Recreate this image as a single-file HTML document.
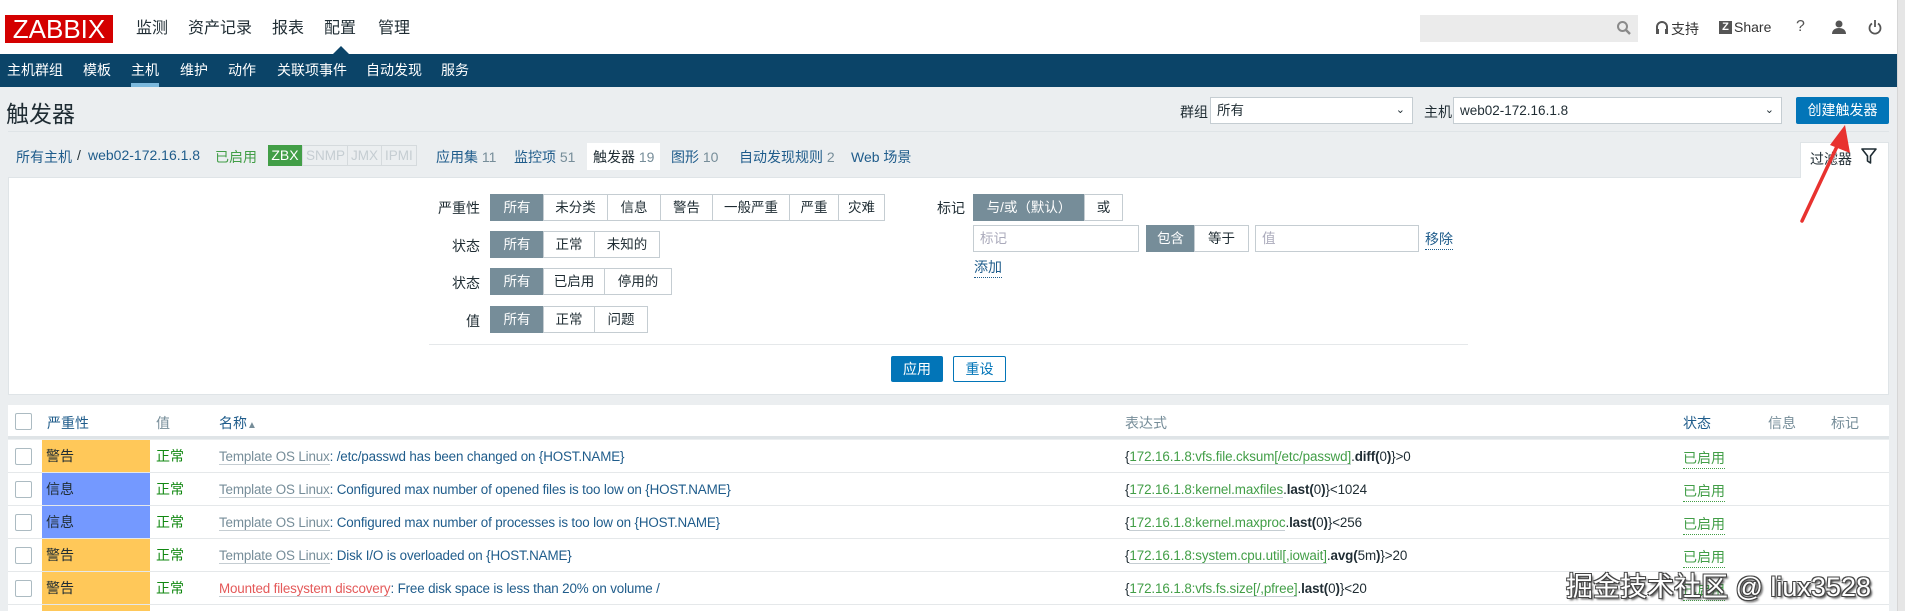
<!DOCTYPE html>
<html><head><meta charset="utf-8"><style>
*{box-sizing:border-box;margin:0;padding:0}
html,body{width:1905px;height:611px;overflow:hidden}
body{background:#ebeef0;font-family:"Liberation Sans","Noto Sans CJK SC",sans-serif;font-size:14px;color:#1f2c33;position:relative}
.a{position:absolute;white-space:nowrap}
.hdr{left:0;top:0;width:1905px;height:54px;background:#fff}
.nav{left:0;top:54px;width:1905px;height:33px;background:#0b4468}
.sb{left:1897px;top:0;width:8px;height:611px;background:#e6e6e6;border-left:1px solid #d6d6d6}
.mn{top:14px;font-size:16px;color:#1f2c33}
.sn{top:60px;font-size:14px;color:#fff}
.btn{position:absolute;height:27px;border:1px solid #c5cdd2;background:#fff;font-size:13.5px;line-height:25px;text-align:center;color:#1f2c33}
.act{background:#768d99;color:#fff;border-color:#768d99}
.lbl{font-size:14px;text-align:right}
.hl{color:#1f5c8b}
.row{left:8px;width:1881px;height:33px;background:#fff;border-bottom:1px solid #e5e8ea;font-size:13.4px;overflow:hidden}
.cb{position:absolute;left:7px;top:8px;width:17px;height:17px;border:1px solid #acbbc2;border-radius:2px;background:#fff}
.sev{position:absolute;left:34px;top:0;width:108px;height:33px;padding-left:4px;line-height:33px;color:#1f2c33;font-size:14px}
.val{position:absolute;left:148px;line-height:33px;color:#118811;font-size:14px}
.nm{position:absolute;left:211px;line-height:33px;color:#1f5c8b;letter-spacing:-0.15px}
.tp{color:#768d99;border-bottom:1px solid #c5cdd2}
.ex{position:absolute;left:1117px;line-height:33px;letter-spacing:-0.1px}
.gk{color:#429e47;border-bottom:1px solid #c5cdd2}
.st{position:absolute;left:1675px;line-height:31px;color:#429e47;border-bottom:1px dotted #429e47;height:26px;top:3px;font-size:14px}
.inp{position:absolute;height:27px;border:1px solid #c5cdd2;background:#fff;color:#aab;font-size:13.5px;line-height:25px;padding-left:6px}
</style></head><body>
<div class="a hdr"></div>
<div class="a" style="left:5px;top:15px;width:108px;height:28px;background:#d40000;color:#fff;font-size:26px;line-height:28px;text-align:center">ZABBIX</div>
<div class="a mn" style="left:136px">监测</div>
<div class="a mn" style="left:188px">资产记录</div>
<div class="a mn" style="left:272px">报表</div>
<div class="a mn" style="left:324px">配置</div>
<div class="a mn" style="left:378px">管理</div>
<div class="a" style="left:333px;top:46px;width:0;height:0;border-left:8px solid transparent;border-right:8px solid transparent;border-bottom:8px solid #0b4468"></div>
<div class="a" style="left:1420px;top:15px;width:218px;height:27px;background:#ebebeb"></div>
<svg class="a" style="left:1616px;top:20px" width="16" height="16" viewBox="0 0 16 16"><circle cx="6.5" cy="6.5" r="4.5" fill="none" stroke="#8a8a8a" stroke-width="2"/><path d="M10 10l4 4" stroke="#8a8a8a" stroke-width="2.4"/></svg>
<svg class="a" style="left:1655px;top:20px" width="14" height="16" viewBox="0 0 14 16"><path d="M2 10V7a5 5 0 0 1 10 0v3" fill="none" stroke="#555" stroke-width="2"/><rect x="1" y="9" width="3" height="5" fill="#555"/><rect x="10" y="9" width="3" height="5" fill="#555"/></svg>
<div class="a" style="left:1671px;top:19px;font-size:14px;color:#333">支持</div>
<div class="a" style="left:1719px;top:21px;width:13px;height:13px;background:#555;color:#fff;font-size:11px;font-weight:bold;line-height:13px;text-align:center">Z</div>
<div class="a" style="left:1734px;top:19px;font-size:14px;color:#333">Share</div>
<div class="a" style="left:1796px;top:18px;font-size:16px;color:#555">?</div>
<svg class="a" style="left:1831px;top:19px" width="16" height="16" viewBox="0 0 16 16"><circle cx="8" cy="5" r="3.5" fill="#555"/><path d="M1 15c0-4 3-6 7-6s7 2 7 6z" fill="#555"/></svg>
<svg class="a" style="left:1867px;top:19px" width="16" height="16" viewBox="0 0 16 16"><path d="M5 4.5a5.5 5.5 0 1 0 6 0" fill="none" stroke="#555" stroke-width="1.8"/><path d="M8 1v7" stroke="#555" stroke-width="1.8"/></svg>
<div class="a nav"></div>
<div class="a sn" style="left:7px">主机群组</div>
<div class="a sn" style="left:83px">模板</div>
<div class="a sn" style="left:131px">主机</div>
<div class="a" style="left:131px;top:83px;width:28px;height:4px;background:#7cb8dc"></div>
<div class="a sn" style="left:180px">维护</div>
<div class="a sn" style="left:228px">动作</div>
<div class="a sn" style="left:277px">关联项事件</div>
<div class="a sn" style="left:366px">自动发现</div>
<div class="a sn" style="left:441px">服务</div>
<div class="a sb"></div>

<div class="a" style="left:6px;top:95px;font-size:23px;color:#1f2c33">触发器</div>
<div class="a lbl" style="left:1180px;top:102px">群组</div>
<div class="a inp" style="left:1210px;top:97px;width:203px;color:#1f2c33">所有<span style="position:absolute;right:7px;font-size:11px">&#8964;</span></div>
<div class="a lbl" style="left:1424px;top:102px">主机</div>
<div class="a inp" style="left:1453px;top:97px;width:329px;color:#1f2c33">web02-172.16.1.8<span style="position:absolute;right:7px;font-size:11px">&#8964;</span></div>
<div class="a" style="left:1796px;top:97px;width:93px;height:27px;background:#0275b8;border-radius:2px;color:#fff;font-size:14px;line-height:27px;text-align:center">创建触发器</div>
<div class="a" style="left:8px;top:131px;width:1881px;height:1px;background:#dfe4e7"></div>

<div class="a hl" style="left:16px;top:147px">所有主机</div>
<div class="a" style="left:77px;top:147px">/</div>
<div class="a hl" style="left:88px;top:147px">web02-172.16.1.8</div>
<div class="a" style="left:215px;top:147px;color:#429e47">已启用</div>
<div class="a" style="left:268px;top:145px;width:34px;height:21px;background:#429e47;color:#fff;line-height:21px;text-align:center">ZBX</div>
<div class="a" style="left:302px;top:145px;width:115px;height:21px;border:1px solid #d5dadd;color:#c5cdd2;line-height:19px;font-size:13.5px"><span style="position:absolute;left:3px">SNMP</span><span style="position:absolute;left:44px;border-left:1px solid #d5dadd;padding-left:3px">JMX</span><span style="position:absolute;left:78px;border-left:1px solid #d5dadd;padding-left:3px">IPMI</span></div>
<div class="a hl" style="left:436px;top:147px">应用集 <span style="color:#768d99">11</span></div>
<div class="a hl" style="left:514px;top:147px">监控项 <span style="color:#768d99">51</span></div>
<div class="a" style="left:587px;top:143px;width:73px;height:27px;background:#fff;padding:4px 0 0 6px">触发器 <span style="color:#768d99">19</span></div>
<div class="a hl" style="left:671px;top:147px">图形 <span style="color:#768d99">10</span></div>
<div class="a hl" style="left:739px;top:147px">自动发现规则 <span style="color:#768d99">2</span></div>
<div class="a hl" style="left:851px;top:147px">Web 场景</div>

<div class="a" style="left:8px;top:177px;width:1881px;height:218px;background:#fff;border:1px solid #dfe4e7"></div>
<div class="a" style="left:1800px;top:142px;width:89px;height:36px;background:#fff;border:1px solid #dfe4e7;border-bottom:none"></div>
<div class="a" style="left:1810px;top:149px">过滤器</div>
<svg class="a" style="left:1861px;top:148px" width="16" height="17" viewBox="0 0 16 17"><path d="M1 1h14l-5.5 7v7l-3-2V8z" fill="none" stroke="#1f2c33" stroke-width="1.6" stroke-linejoin="round"/></svg>

<div class="a lbl" style="left:438px;top:198px;width:42px">严重性</div>
<div class="btn act" style="left:490px;top:194px;width:54px">所有</div>
<div class="btn" style="left:543px;top:194px;width:65px">未分类</div>
<div class="btn" style="left:607px;top:194px;width:54px">信息</div>
<div class="btn" style="left:660px;top:194px;width:53px">警告</div>
<div class="btn" style="left:712px;top:194px;width:78px">一般严重</div>
<div class="btn" style="left:789px;top:194px;width:50px">严重</div>
<div class="btn" style="left:838px;top:194px;width:47px">灾难</div>
<div class="a lbl" style="left:438px;top:236px;width:42px">状态</div>
<div class="btn act" style="left:490px;top:231px;width:54px">所有</div>
<div class="btn" style="left:543px;top:231px;width:52px">正常</div>
<div class="btn" style="left:594px;top:231px;width:66px">未知的</div>
<div class="a lbl" style="left:438px;top:273px;width:42px">状态</div>
<div class="btn act" style="left:490px;top:268px;width:54px">所有</div>
<div class="btn" style="left:543px;top:268px;width:62px">已启用</div>
<div class="btn" style="left:604px;top:268px;width:68px">停用的</div>
<div class="a lbl" style="left:438px;top:311px;width:42px">值</div>
<div class="btn act" style="left:490px;top:306px;width:54px">所有</div>
<div class="btn" style="left:543px;top:306px;width:52px">正常</div>
<div class="btn" style="left:594px;top:306px;width:54px">问题</div>

<div class="a lbl" style="left:937px;top:198px">标记</div>
<div class="btn act" style="left:973px;top:194px;width:112px">与/或（默认）</div>
<div class="btn" style="left:1084px;top:194px;width:39px">或</div>
<div class="inp" style="left:973px;top:225px;width:166px">标记</div>
<div class="btn act" style="left:1146px;top:225px;width:49px">包含</div>
<div class="btn" style="left:1194px;top:225px;width:55px">等于</div>
<div class="inp" style="left:1255px;top:225px;width:164px">值</div>
<div class="a hl" style="left:1425px;top:229px;border-bottom:1px dotted #1f5c8b">移除</div>
<div class="a hl" style="left:974px;top:257px;border-bottom:1px dotted #1f5c8b">添加</div>
<div class="a" style="left:429px;top:344px;width:1039px;height:1px;background:#e5e8ea"></div>
<div class="a" style="left:891px;top:356px;width:52px;height:26px;background:#0275b8;border-radius:2px;color:#fff;line-height:26px;text-align:center">应用</div>
<div class="a" style="left:953px;top:356px;width:53px;height:26px;background:#fff;border:1px solid #0275b8;border-radius:2px;color:#0275b8;line-height:24px;text-align:center">重设</div>

<div class="a" style="left:8px;top:405px;width:1881px;height:34px;background:#fff;border-bottom:3px solid #dfe4e7"></div>
<div class="a" style="left:15px;top:413px;width:17px;height:17px;border:1px solid #acbbc2;border-radius:2px;background:#fff"></div>
<div class="a hl" style="left:47px;top:413px">严重性</div>
<div class="a" style="left:156px;top:413px;color:#768d99">值</div>
<div class="a hl" style="left:219px;top:413px">名称<span style="font-size:10px;color:#768d99">▲</span></div>
<div class="a" style="left:1125px;top:413px;color:#768d99">表达式</div>
<div class="a hl" style="left:1683px;top:413px">状态</div>
<div class="a" style="left:1768px;top:413px;color:#768d99">信息</div>
<div class="a" style="left:1831px;top:413px;color:#768d99">标记</div>

<div class="a row" style="top:440px"><div class="cb"></div><div class="sev" style="background:#ffc859">警告</div><div class="val">正常</div><div class="nm"><span class="tp">Template OS Linux</span>: /etc/passwd has been changed on {HOST.NAME}</div><div class="ex">{<span class="gk">172.16.1.8:vfs.file.cksum[/etc/passwd]</span>.<b>diff(</b>0<b>)</b>}&gt;0</div><div class="st">已启用</div></div>
<div class="a row" style="top:473px"><div class="cb"></div><div class="sev" style="background:#7499ff">信息</div><div class="val">正常</div><div class="nm"><span class="tp">Template OS Linux</span>: Configured max number of opened files is too low on {HOST.NAME}</div><div class="ex">{<span class="gk">172.16.1.8:kernel.maxfiles</span>.<b>last(</b>0<b>)</b>}&lt;1024</div><div class="st">已启用</div></div>
<div class="a row" style="top:506px"><div class="cb"></div><div class="sev" style="background:#7499ff">信息</div><div class="val">正常</div><div class="nm"><span class="tp">Template OS Linux</span>: Configured max number of processes is too low on {HOST.NAME}</div><div class="ex">{<span class="gk">172.16.1.8:kernel.maxproc</span>.<b>last(</b>0<b>)</b>}&lt;256</div><div class="st">已启用</div></div>
<div class="a row" style="top:539px"><div class="cb"></div><div class="sev" style="background:#ffc859">警告</div><div class="val">正常</div><div class="nm"><span class="tp">Template OS Linux</span>: Disk I/O is overloaded on {HOST.NAME}</div><div class="ex">{<span class="gk">172.16.1.8:system.cpu.util[,iowait]</span>.<b>avg(</b>5m<b>)</b>}&gt;20</div><div class="st">已启用</div></div>
<div class="a row" style="top:572px"><div class="cb"></div><div class="sev" style="background:#ffc859">警告</div><div class="val">正常</div><div class="nm"><span class="tp" style="color:#e45959">Mounted filesystem discovery</span>: Free disk space is less than 20% on volume /</div><div class="ex">{<span class="gk">172.16.1.8:vfs.fs.size[/,pfree]</span>.<b>last(</b>0<b>)</b>}&lt;20</div><div class="st">已启用</div></div>
<div class="a row" style="top:605px;height:6px;border:none"><div class="sev" style="background:#ffc859;height:6px"></div></div>

<div class="a" style="left:1566px;top:570px;font-size:27px;line-height:34px;color:#fff;text-shadow:-1px -1px 0 #444,1px -1px 0 #444,-1px 1px 0 #444,1px 1px 0 #444,2px 2px 2px #333">掘金技术社区 @ liux3528</div>

<svg class="a" style="left:1790px;top:115px" width="70" height="115" viewBox="0 0 70 115"><path d="M12 106L50 25" stroke="#e8322f" stroke-width="3.5" stroke-linecap="round"/><path d="M55 10L60 38L40 30z" fill="#e8322f"/></svg>
</body></html>
